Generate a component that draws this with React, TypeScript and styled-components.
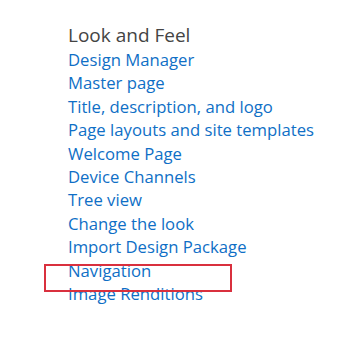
import * as React from "react";
import styled, { createGlobalStyle } from "styled-components";

const GlobalStyle = createGlobalStyle`
  html, body {
    margin: 0;
    padding: 0;
    background: #ffffff;
  }
  body {
    font-family: "Open Sans", "Noto Sans", sans-serif;
  }
`;

const Page = styled.div`
  width: 350px;
  height: 350px;
  padding: 22px 0 0 68px;
  box-sizing: border-box;
`;

const Section = styled.div`
  position: relative;
  display: flex;
  flex-direction: column;
`;

const Heading = styled.h2`
  margin: 0;
  font-size: 19px;
  font-weight: 400;
  line-height: 26px;
  color: #444444;
`;

const LinkItem = styled.a`
  display: block;
  font-size: 16.7px;
  line-height: 23.4px;
  color: #0f6fc6;
  text-decoration: none;
  white-space: nowrap;
`;

const Highlight = styled.div`
  position: absolute;
  left: -24px;
  top: 242px;
  width: 184px;
  height: 24px;
  border: 2px solid #d9303e;
`;

const links = [
  "Design Manager",
  "Master page",
  "Title, description, and logo",
  "Page layouts and site templates",
  "Welcome Page",
  "Device Channels",
  "Tree view",
  "Change the look",
  "Import Design Package",
  "Navigation",
  "Image Renditions",
];

function App() {
  return (
    <Page>
      <GlobalStyle />
      <Section>
        <Heading>Look and Feel</Heading>
        {links.map((l) => (
          <LinkItem key={l} href="#">
            {l}
          </LinkItem>
        ))}
        <Highlight />
      </Section>
    </Page>
  );
}

export default App;
